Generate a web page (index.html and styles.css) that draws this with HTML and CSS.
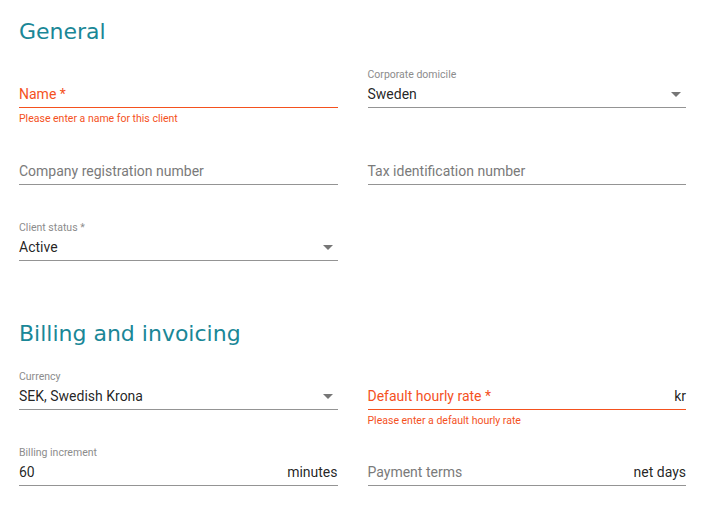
FILE: index.html
```html
<!DOCTYPE html>
<html lang="en">
<head>
    <meta charset="UTF-8">
    <title>Client settings</title>
    <link rel="stylesheet" href="styles.css">
</head>
<body>
    <div class="page">
        <section class="section">
            <h2 class="section-title">General</h2>
            <div class="form-grid">
                <div class="field first-row invalid">
                    <div class="field-label"></div>
                    <div class="field-row">
                        <span class="placeholder">Name *</span>
                    </div>
                    <div class="field-hint">Please enter a name for this client</div>
                </div>
                <div class="field first-row">
                    <div class="field-label">Corporate domicile</div>
                    <div class="field-row">
                        <span class="value">Sweden</span>
                        <span class="arrow"></span>
                    </div>
                </div>

                <div class="field">
                    <div class="field-label"></div>
                    <div class="field-row">
                        <span class="placeholder">Company registration number</span>
                    </div>
                </div>
                <div class="field">
                    <div class="field-label"></div>
                    <div class="field-row">
                        <span class="placeholder">Tax identification number</span>
                    </div>
                </div>

                <div class="field">
                    <div class="field-label">Client status *</div>
                    <div class="field-row">
                        <span class="value">Active</span>
                        <span class="arrow"></span>
                    </div>
                </div>
            </div>
        </section>

        <section class="section billing">
            <h2 class="section-title">Billing and invoicing</h2>
            <div class="form-grid">
                <div class="field">
                    <div class="field-label">Currency</div>
                    <div class="field-row">
                        <span class="value">SEK, Swedish Krona</span>
                        <span class="arrow"></span>
                    </div>
                </div>
                <div class="field invalid">
                    <div class="field-label"></div>
                    <div class="field-row">
                        <span class="placeholder">Default hourly rate *</span>
                        <span class="suffix">kr</span>
                    </div>
                    <div class="field-hint">Please enter a default hourly rate</div>
                </div>

                <div class="field">
                    <div class="field-label">Billing increment</div>
                    <div class="field-row">
                        <span class="value">60</span>
                        <span class="suffix">minutes</span>
                    </div>
                </div>
                <div class="field">
                    <div class="field-label"></div>
                    <div class="field-row">
                        <span class="placeholder">Payment terms</span>
                        <span class="suffix">net days</span>
                    </div>
                </div>
            </div>
        </section>
    </div>
</body>
</html>
```

FILE: styles.css
```css
body {
    margin: 0;
    padding: 0;
    background: #fff;
    font-family: Roboto, 'Liberation Sans', sans-serif;
    color: rgba(0,0,0,0.87);
}

.page {
    padding: 14px 19px 0 19px;
}

.section-title {
    margin: 0;
    font-family: 'DejaVu Sans', sans-serif;
    font-weight: normal;
    font-size: 22px;
    line-height: 36px;
    color: #1a8797;
}

.billing {
    margin-top: 19px;
}

.form-grid {
    display: grid;
    grid-template-columns: 1fr 1fr;
    column-gap: 30px;
    margin-top: 18px;
}

.field {
    height: 76px;
}

.field.first-row {
    height: 77px;
}

.field-label {
    height: 14px;
    font-size: 10.5px;
    line-height: 14px;
    color: #8c8c8c;
}

.field-row {
    display: flex;
    align-items: center;
    height: 20px;
    padding: 2px 0 3px 0;
    font-size: 14px;
    line-height: 20px;
    border-bottom: 1px solid #949494;
}

.placeholder {
    flex: 1;
    color: #7a7a7a;
}

.value {
    flex: 1;
}

.suffix {
    color: rgba(0,0,0,0.87);
}

.arrow {
    width: 0;
    height: 0;
    margin-right: 5px;
    border-left: 5px solid transparent;
    border-right: 5px solid transparent;
    border-top: 5px solid #767676;
}

.invalid .placeholder {
    color: #f4511e;
}

.invalid .field-row {
    border-bottom-color: #f4511e;
}

.field-hint {
    margin-top: 5px;
    font-size: 10.5px;
    line-height: 12px;
    color: #f4511e;
}
```
